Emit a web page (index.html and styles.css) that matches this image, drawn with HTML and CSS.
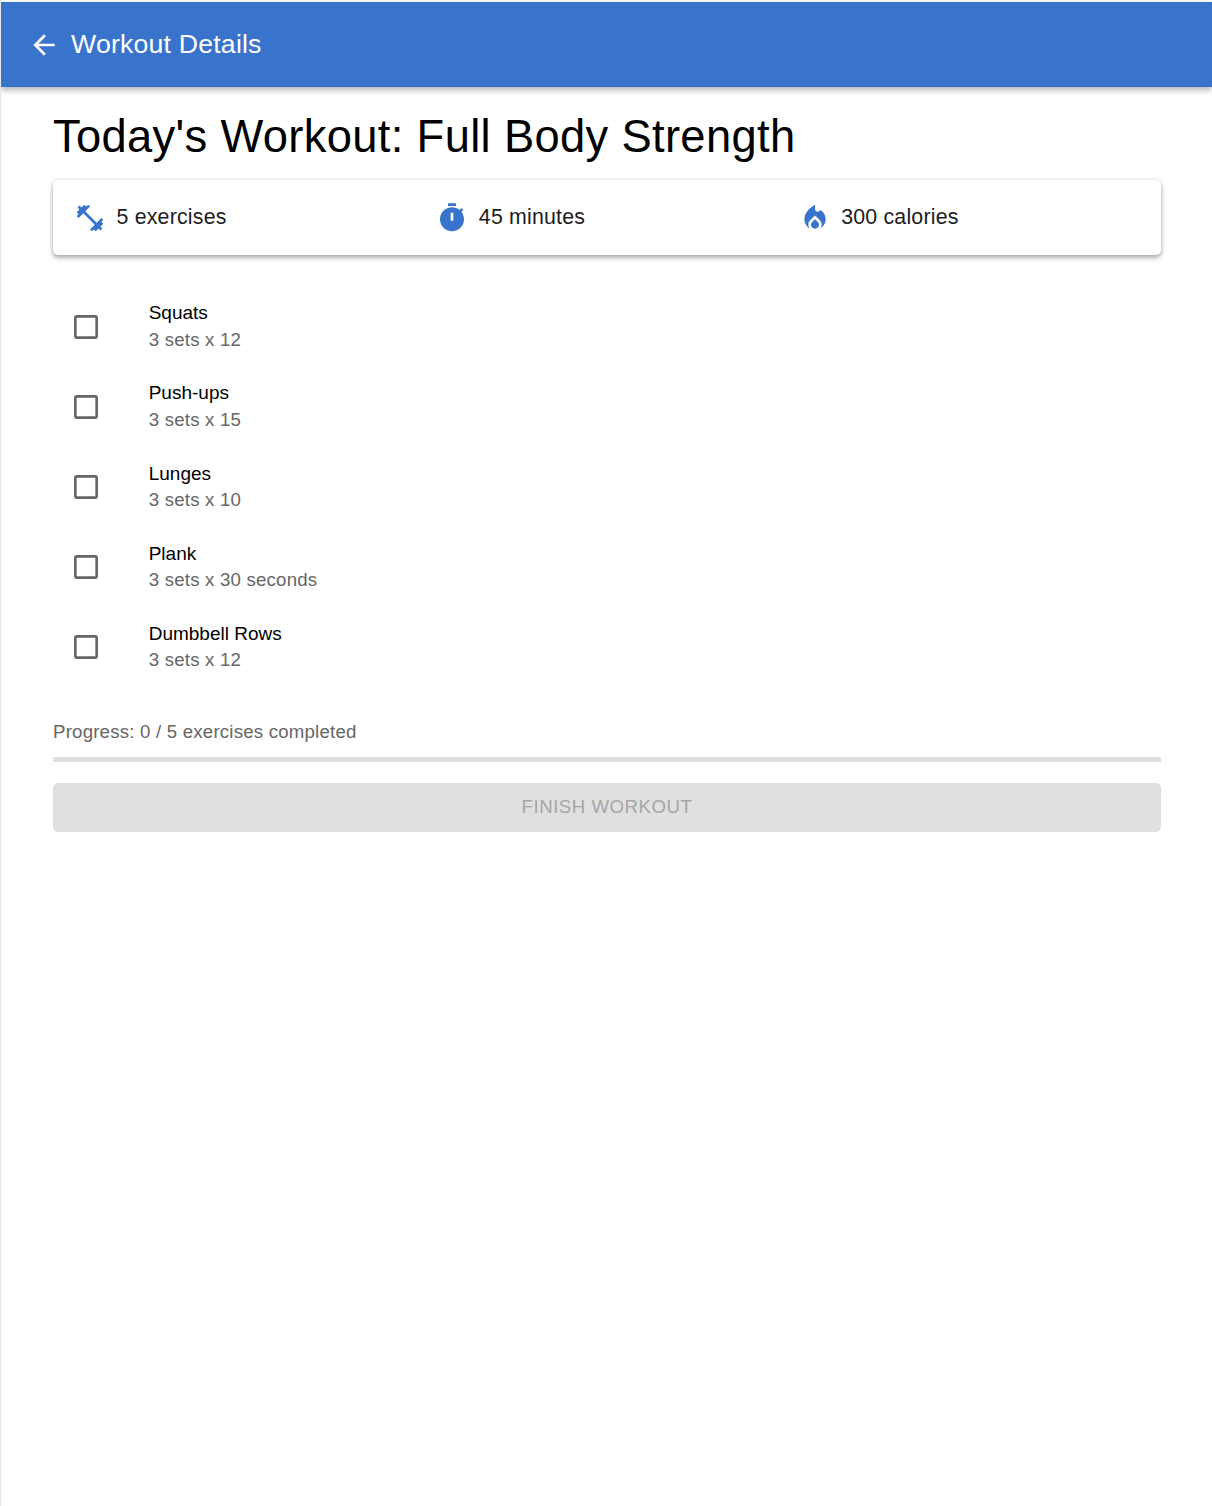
FILE: index.html
```html
<!DOCTYPE html>
<html lang="en">
<head>
  <meta charset="UTF-8">
  <meta name="viewport" content="width=device-width, initial-scale=1.0">
  <title>Workout Details</title>
  <link rel="stylesheet" href="styles.css">
</head>
<body>
  <header class="app-bar">
    <svg class="back-icon" viewBox="0 0 24 24"><path d="M20 11H7.83l5.59-5.59L12 4l-8 8 8 8 1.41-1.41L7.83 13H20v-2z"/></svg>
    <h1 class="app-title">Workout Details</h1>
  </header>

  <main class="content">
    <h2 class="page-title">Today's Workout: Full Body Strength</h2>

    <div class="summary-card">
      <div class="summary-item">
        <svg class="summary-icon" viewBox="0 0 24 24"><path d="M20.57 14.86L22 13.43 20.57 12 17 15.57 8.43 7 12 3.43 10.57 2 9.14 3.43 7.71 2 5.57 4.14 4.14 2.71 2.71 4.14l1.43 1.43L2 7.71l1.43 1.43L2 10.57 3.43 12 7 8.43 15.57 17 12 20.57 13.43 22l1.43-1.43L16.29 22l2.14-2.14 1.43 1.43 1.43-1.43-1.43-1.43L22 16.29z"/></svg>
        <span>5 exercises</span>
      </div>
      <div class="summary-item">
        <svg class="summary-icon" viewBox="0 0 24 24"><path d="M9 1h6v2H9zm10.03 6.39 1.42-1.42c-.43-.51-.9-.99-1.41-1.41l-1.42 1.42C16.07 4.74 14.12 4 12 4c-4.97 0-9 4.03-9 9s4.02 9 9 9 9-4.03 9-9c0-2.12-.74-4.07-1.97-5.61zM13 14h-2V8h2v6z"/></svg>
        <span>45 minutes</span>
      </div>
      <div class="summary-item">
        <svg class="summary-icon" viewBox="0 0 24 24"><path d="M12 12.9l-2.13 2.09C9.31 15.55 9 16.28 9 17.06 9 18.68 10.35 20 12 20s3-1.32 3-2.94c0-.78-.31-1.52-.87-2.07L12 12.9z"/><path d="M16 6l-.44.55C14.38 8.02 12 7.19 12 5.3V2S4 6 4 13c0 2.92 1.56 5.47 3.89 6.86-.56-.79-.89-1.76-.89-2.8 0-1.32.52-2.56 1.47-3.5L12 10.1l3.53 3.47c.95.93 1.47 2.17 1.47 3.5 0 1.02-.31 1.96-.85 2.75 1.89-1.15 3.29-3.06 3.71-5.3.66-3.55-1.07-6.9-3.86-8.52z"/></svg>
        <span>300 calories</span>
      </div>
    </div>

    <ul class="exercise-list">
      <li class="exercise">
        <svg class="check-icon" viewBox="0 0 24 24"><path d="M19 5v14H5V5h14m0-2H5c-1.1 0-2 .9-2 2v14c0 1.1.9 2 2 2h14c1.1 0 2-.9 2-2V5c0-1.1-.9-2-2-2z"/></svg>
        <div class="exercise-text">
          <span class="exercise-name">Squats</span>
          <span class="exercise-sets">3 sets x 12</span>
        </div>
      </li>
      <li class="exercise">
        <svg class="check-icon" viewBox="0 0 24 24"><path d="M19 5v14H5V5h14m0-2H5c-1.1 0-2 .9-2 2v14c0 1.1.9 2 2 2h14c1.1 0 2-.9 2-2V5c0-1.1-.9-2-2-2z"/></svg>
        <div class="exercise-text">
          <span class="exercise-name">Push-ups</span>
          <span class="exercise-sets">3 sets x 15</span>
        </div>
      </li>
      <li class="exercise">
        <svg class="check-icon" viewBox="0 0 24 24"><path d="M19 5v14H5V5h14m0-2H5c-1.1 0-2 .9-2 2v14c0 1.1.9 2 2 2h14c1.1 0 2-.9 2-2V5c0-1.1-.9-2-2-2z"/></svg>
        <div class="exercise-text">
          <span class="exercise-name">Lunges</span>
          <span class="exercise-sets">3 sets x 10</span>
        </div>
      </li>
      <li class="exercise">
        <svg class="check-icon" viewBox="0 0 24 24"><path d="M19 5v14H5V5h14m0-2H5c-1.1 0-2 .9-2 2v14c0 1.1.9 2 2 2h14c1.1 0 2-.9 2-2V5c0-1.1-.9-2-2-2z"/></svg>
        <div class="exercise-text">
          <span class="exercise-name">Plank</span>
          <span class="exercise-sets">3 sets x 30 seconds</span>
        </div>
      </li>
      <li class="exercise">
        <svg class="check-icon" viewBox="0 0 24 24"><path d="M19 5v14H5V5h14m0-2H5c-1.1 0-2 .9-2 2v14c0 1.1.9 2 2 2h14c1.1 0 2-.9 2-2V5c0-1.1-.9-2-2-2z"/></svg>
        <div class="exercise-text">
          <span class="exercise-name">Dumbbell Rows</span>
          <span class="exercise-sets">3 sets x 12</span>
        </div>
      </li>
    </ul>

    <p class="progress-label">Progress: 0 / 5 exercises completed</p>
    <div class="progress-bar"></div>
    <button class="finish-btn" disabled>FINISH WORKOUT</button>
  </main>
</body>
</html>
```

FILE: styles.css
```css
html, body {
  height: 100%;
}

body {
  margin: 0;
  padding-top: 2px;
  box-sizing: border-box;
  min-height: 1506px;
  background: #fff;
  border-left: 1px solid #e8e8e8;
  font-family: "Liberation Sans", Arial, sans-serif;
  color: #000;
}

.app-bar {
  display: flex;
  align-items: center;
  height: 85px;
  padding-left: 27px;
  background-color: #3874cb;
  color: #fff;
  box-shadow: 0 3px 6px rgba(0, 0, 0, 0.3);
}

.back-icon {
  width: 32px;
  height: 32px;
  fill: #fff;
  margin-right: 11px;
}

.app-title {
  margin: 0;
  font-size: 26.67px;
  font-weight: 400;
  letter-spacing: 0.2px;
}

.content {
  padding: 0 51px 0 52px;
}

.page-title {
  margin: 0;
  height: 93px;
  line-height: 100px;
  font-size: 45.33px;
  font-weight: 400;
  letter-spacing: 0.33px;
}

.summary-card {
  display: grid;
  grid-template-columns: repeat(3, 1fr);
  align-items: center;
  height: 75px;
  padding-left: 21px;
  border-radius: 5px;
  box-shadow: 0 3px 5px rgba(0, 0, 0, 0.3), 0 0 4px rgba(0, 0, 0, 0.12);
}

.summary-item {
  display: flex;
  align-items: center;
  gap: 10.5px;
  font-size: 21.33px;
  letter-spacing: 0.2px;
  color: #1c1c1c;
}

.summary-icon {
  width: 32px;
  height: 32px;
  fill: #3874cb;
}

.exercise-list {
  list-style: none;
  margin: 32px 0 0;
  padding: 0;
}

.exercise {
  display: flex;
  align-items: center;
  height: 80.1px;
}

.check-icon {
  width: 32px;
  height: 32px;
  fill: #666;
  margin-left: 17px;
  margin-right: 46.7px;
}

.exercise-text {
  display: flex;
  flex-direction: column;
  gap: 2.65px;
  padding-bottom: 0.75px;
}

.exercise-name {
  font-size: 19px;
  line-height: 24px;
}

.exercise-sets {
  font-size: 18.67px;
  line-height: 24px;
  letter-spacing: 0.2px;
  color: #666;
}

.progress-label {
  margin: 30.5px 0 0;
  font-size: 18.67px;
  line-height: 28px;
  letter-spacing: 0.2px;
  color: #666;
}

.progress-bar {
  height: 5px;
  margin-top: 11px;
  background: #e0e0e0;
}

.finish-btn {
  display: block;
  width: 100%;
  height: 49px;
  margin-top: 21px;
  border: none;
  border-radius: 5px;
  background: #e0e0e0;
  color: #a6a6a6;
  font-family: inherit;
  font-size: 18.67px;
  letter-spacing: 0.5px;
}
```
